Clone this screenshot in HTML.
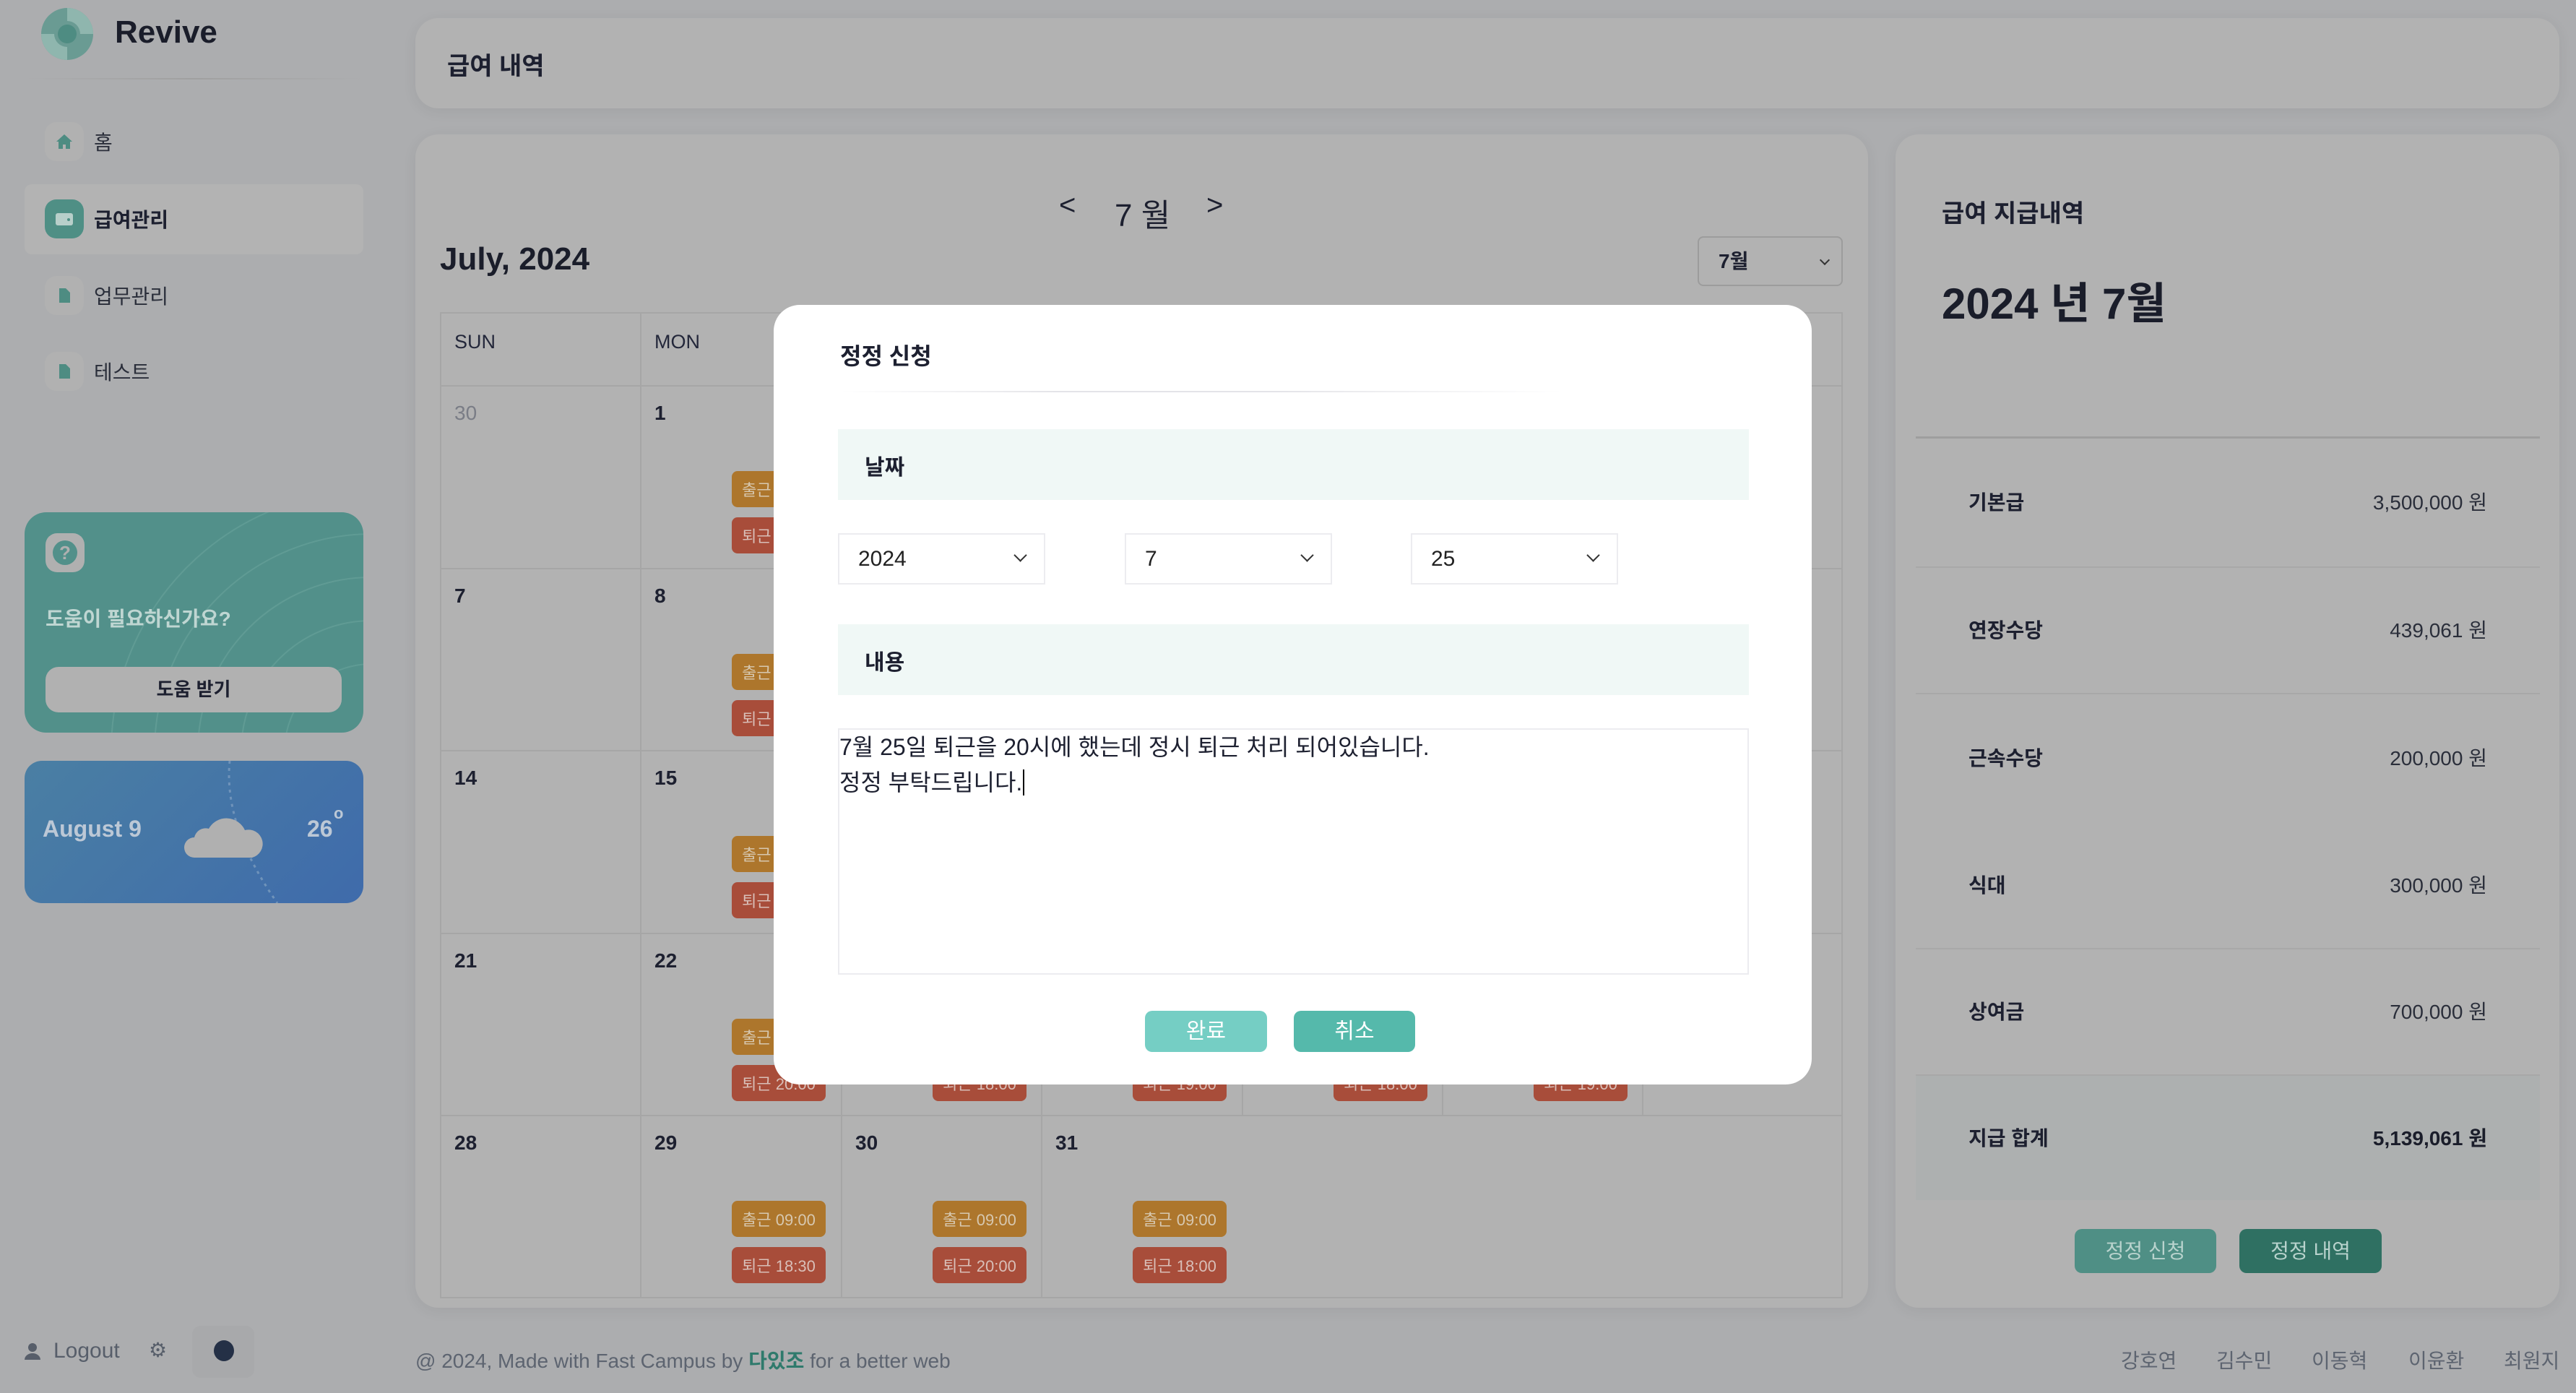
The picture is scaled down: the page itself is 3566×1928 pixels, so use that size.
<!DOCTYPE html>
<html><head><meta charset="utf-8">
<style>
*{box-sizing:border-box;margin:0;padding:0}
body{width:3566px;height:1928px;background:#acadaf;font-family:"Liberation Sans","Noto Sans CJK KR",sans-serif;color:#1d2030;position:relative;overflow:hidden}
.a{position:absolute}
.card{position:absolute;background:#b2b2b2;border-radius:32px;box-shadow:0 4px 20px rgba(0,0,0,0.06)}
.nav{position:absolute;left:62px;font-size:28px;display:flex;align-items:center;gap:14px;color:#2a2e3a}
.ic{width:54px;height:54px;border-radius:16px;background:#b1b1b1;display:flex;align-items:center;justify-content:center}
.day{position:absolute;font-size:28px;font-weight:bold;color:#1d2030}
.hd{position:absolute;font-size:27px;color:#23273a;top:458px}
.b{position:absolute;width:130px;height:50px;border-radius:8px;font-size:22px;color:#d7c8b0;display:flex;align-items:center;justify-content:center}
.o{background:#ad762c}
.r{background:#a84d3a;color:#d9bfb8}
.vl{position:absolute;width:2px;background:#a6a6a6}
.hl{position:absolute;height:2px;background:#a6a6a6}
.lab{position:absolute;left:2725px;font-size:28px;font-weight:bold;color:#1d2030}
.val{position:absolute;right:123px;font-size:28px;color:#2a2e3a}
.sep{position:absolute;left:2652px;width:864px;height:2px;background:#a8a8a8}
.sel{position:absolute;top:738px;width:287px;height:71px;border:2px solid #ececf0;font-size:30px;color:#222;padding-left:26px;display:flex;align-items:center}
.sel:after{content:"";position:absolute;right:26px;top:22px;width:11px;height:11px;border-right:2px solid #333;border-bottom:2px solid #333;transform:rotate(45deg)}
.fn{position:absolute;top:1862px;font-size:28px;color:#5d6470}
</style></head><body>

<svg class="a" style="left:56px;top:10px" width="74" height="74" viewBox="0 0 74 74">
<circle cx="37" cy="37" r="36" fill="#6a9b93"/>
<path d="M37 1 A36 36 0 0 1 73 37 L55 37 A18 18 0 0 0 37 19Z" fill="#8fb6ae"/>
<path d="M37 73 A36 36 0 0 1 1 37 L19 37 A18 18 0 0 0 37 55Z" fill="#8fb6ae"/>
<circle cx="37" cy="37" r="13" fill="#4e8c82"/>
</svg>
<div class="a" style="left:159px;top:20px;font-size:44px;font-weight:bold;color:#1a1d2a">Revive</div>
<div class="a" style="left:34px;top:108px;width:470px;height:2px;background:linear-gradient(90deg,rgba(160,160,160,0),#a0a0a0,rgba(160,160,160,0))"></div>

<div class="nav" style="top:169px"><div class="ic"><svg width="24" height="22" viewBox="0 0 24 22"><path d="M12 1 L1 11 H4 V21 H10 V15 H14 V21 H20 V11 H23Z" fill="#4e8c82"/></svg></div><span>홈</span></div>
<div class="a" style="left:34px;top:255px;width:469px;height:97px;background:#b3b3b3;border-radius:10px"></div>
<div class="nav" style="top:276px;font-weight:bold;color:#1d2030"><div class="ic" style="background:#4f8f85"><svg width="28" height="22" viewBox="0 0 28 22"><rect x="2" y="3" width="24" height="17" rx="3" fill="#b8cfca"/><circle cx="20" cy="12" r="2" fill="#4f8f85"/></svg></div><span>급여관리</span></div>
<div class="nav" style="top:382px"><div class="ic"><svg width="18" height="22" viewBox="0 0 18 22"><path d="M2 1 H11 L17 7 V21 H2Z" fill="#4e8c82"/></svg></div><span>업무관리</span></div>
<div class="nav" style="top:487px"><div class="ic"><svg width="18" height="22" viewBox="0 0 18 22"><path d="M2 1 H11 L17 7 V21 H2Z" fill="#4e8c82"/></svg></div><span>테스트</span></div>

<div class="a" style="left:34px;top:709px;width:469px;height:305px;border-radius:30px;background:#52908a;overflow:hidden">
 <svg class="a" style="left:0;top:0" width="469" height="305"><g fill="none" stroke="#6aa39c" stroke-width="2" opacity="0.6"><circle cx="480" cy="330" r="120"/><circle cx="480" cy="330" r="180"/><circle cx="480" cy="330" r="240"/><circle cx="480" cy="330" r="300"/><circle cx="480" cy="330" r="360"/></g></svg>
 <div class="a" style="left:29px;top:29px;width:54px;height:54px;border-radius:16px;background:#b0b0b0;display:flex;align-items:center;justify-content:center"><div style="width:34px;height:34px;border-radius:50%;background:#52908a;color:#b0b0b0;font-size:26px;font-weight:bold;text-align:center;line-height:34px">?</div></div>
 <div class="a" style="left:29px;top:126px;font-size:28px;font-weight:bold;color:#bfd6d2">도움이 필요하신가요?</div>
 <div class="a" style="left:29px;top:214px;width:410px;height:63px;border-radius:18px;background:#b1b1b1;font-size:26px;font-weight:bold;color:#1d2030;text-align:center;line-height:63px">도움 받기</div>
</div>
<div class="a" style="left:34px;top:1053px;width:469px;height:197px;border-radius:24px;background:linear-gradient(135deg,#4a7fa3,#3f6bab);overflow:hidden">
 <svg class="a" style="left:0;top:0" width="469" height="197"><path d="M284 0 Q275 90 350 197" fill="none" stroke="#6f93ba" stroke-width="3" stroke-dasharray="4 6"/></svg>
 <div class="a" style="left:25px;top:76px;font-size:32px;font-weight:bold;color:#bcc8d6">August 9</div>
 <svg class="a" style="left:220px;top:66px" width="110" height="70" viewBox="0 0 110 70"><path d="M15 68 A14 14 0 0 1 15 40 A16 16 0 0 1 35 28 A28 28 0 0 1 85 30 A18 18 0 0 1 95 68Z" fill="#b0b0b0"/></svg>
 <div class="a" style="left:391px;top:76px;font-size:32px;font-weight:bold;color:#bcc8d6">26</div>
 <div class="a" style="left:428px;top:60px;font-size:22px;font-weight:bold;color:#bcc8d6">o</div>
</div>

<svg class="a" style="left:34px;top:1858px" width="22" height="24" viewBox="0 0 22 24"><circle cx="11" cy="7" r="6" fill="#575e6a"/><path d="M0 24 A11 9 0 0 1 22 24Z" fill="#575e6a"/></svg>
<div class="a" style="left:74px;top:1853px;font-size:30px;color:#575e6a">Logout</div>
<div class="a" style="left:206px;top:1852px;font-size:28px;color:#575e6a">⚙</div>
<div class="a" style="left:266px;top:1835px;width:86px;height:72px;border-radius:12px;background:#a8a9ab"></div>
<div class="a" style="left:296px;top:1855px;width:28px;height:29px;border-radius:50%;background:#243046"></div>

<div class="card" style="left:575px;top:25px;width:2968px;height:125px"></div>
<div class="a" style="left:619px;top:64px;font-size:34px;font-weight:bold;color:#1d2030">급여 내역</div>

<div class="card" style="left:575px;top:186px;width:2011px;height:1624px"></div>
<div class="a" style="left:1466px;top:262px;font-size:40px;color:#1d2030">&lt;</div>
<div class="a" style="left:1543px;top:262px;font-size:44px;color:#1d2030">7 월</div>
<div class="a" style="left:1670px;top:262px;font-size:40px;color:#1d2030">&gt;</div>
<div class="a" style="left:609px;top:334px;font-size:44px;font-weight:bold;color:#1a1d2a">July, 2024</div>
<div class="a" style="left:2350px;top:327px;width:201px;height:69px;border:2px solid #9c9c9c;border-radius:8px;font-size:28px;font-weight:bold;padding-left:27px;line-height:65px">7월<span style="position:absolute;right:18px;top:26px;width:10px;height:10px;border-right:2px solid #333;border-bottom:2px solid #333;transform:rotate(45deg)"></span></div>

<div class="a" style="left:609px;top:432px;width:1942px;height:1365px;border:2px solid #a6a6a6"></div>
<div class="hl" style="left:609px;top:533px;width:1942px"></div>
<div class="hl" style="left:609px;top:786px;width:1942px"></div>
<div class="hl" style="left:609px;top:1038px;width:1942px"></div>
<div class="hl" style="left:609px;top:1291px;width:1942px"></div>
<div class="hl" style="left:609px;top:1543px;width:1942px"></div>
<div class="vl" style="left:886px;top:432px;height:1365px"></div>
<div class="vl" style="left:1164px;top:432px;height:1365px"></div>
<div class="vl" style="left:1441px;top:432px;height:1365px"></div>
<div class="vl" style="left:1719px;top:432px;height:1112px"></div>
<div class="vl" style="left:1996px;top:432px;height:1112px"></div>
<div class="vl" style="left:2273px;top:432px;height:1112px"></div>

<div class="hd" style="left:629px">SUN</div><div class="hd" style="left:906px">MON</div><div class="hd" style="left:1184px">TUE</div><div class="hd" style="left:1461px">WED</div><div class="hd" style="left:1739px">THU</div><div class="hd" style="left:2016px">FRI</div><div class="hd" style="left:2293px">SAT</div>

<div class="day" style="left:629px;top:556px;color:#7a7d86;font-weight:normal">30</div><div class="day" style="left:906px;top:556px">1</div><div class="day" style="left:1184px;top:556px">2</div><div class="day" style="left:1461px;top:556px">3</div><div class="day" style="left:1739px;top:556px">4</div><div class="day" style="left:2016px;top:556px">5</div><div class="day" style="left:2293px;top:556px">6</div>
<div class="day" style="left:629px;top:809px">7</div><div class="day" style="left:906px;top:809px">8</div><div class="day" style="left:1184px;top:809px">9</div><div class="day" style="left:1461px;top:809px">10</div><div class="day" style="left:1739px;top:809px">11</div><div class="day" style="left:2016px;top:809px">12</div><div class="day" style="left:2293px;top:809px">13</div>
<div class="day" style="left:629px;top:1061px">14</div><div class="day" style="left:906px;top:1061px">15</div><div class="day" style="left:1184px;top:1061px">16</div><div class="day" style="left:1461px;top:1061px">17</div><div class="day" style="left:1739px;top:1061px">18</div><div class="day" style="left:2016px;top:1061px">19</div><div class="day" style="left:2293px;top:1061px">20</div>
<div class="day" style="left:629px;top:1314px">21</div><div class="day" style="left:906px;top:1314px">22</div><div class="day" style="left:1184px;top:1314px">23</div><div class="day" style="left:1461px;top:1314px">24</div><div class="day" style="left:1739px;top:1314px">25</div><div class="day" style="left:2016px;top:1314px">26</div><div class="day" style="left:2293px;top:1314px">27</div>
<div class="day" style="left:629px;top:1566px">28</div><div class="day" style="left:906px;top:1566px">29</div><div class="day" style="left:1184px;top:1566px">30</div><div class="day" style="left:1461px;top:1566px">31</div>

<div class="b o" style="left:1013px;top:652px">출근 09:00</div><div class="b r" style="left:1013px;top:716px">퇴근 18:00</div>
<div class="b o" style="left:1291px;top:652px">출근 09:00</div><div class="b r" style="left:1291px;top:716px">퇴근 18:00</div>
<div class="b o" style="left:1568px;top:652px">출근 09:00</div><div class="b r" style="left:1568px;top:716px">퇴근 18:00</div>
<div class="b o" style="left:1846px;top:652px">출근 09:00</div><div class="b r" style="left:1846px;top:716px">퇴근 18:00</div>
<div class="b o" style="left:2123px;top:652px">출근 09:00</div><div class="b r" style="left:2123px;top:716px">퇴근 18:00</div>
<div class="b o" style="left:1013px;top:905px">출근 09:00</div><div class="b r" style="left:1013px;top:969px">퇴근 18:00</div>
<div class="b o" style="left:1291px;top:905px">출근 09:00</div><div class="b r" style="left:1291px;top:969px">퇴근 18:00</div>
<div class="b o" style="left:1568px;top:905px">출근 09:00</div><div class="b r" style="left:1568px;top:969px">퇴근 18:00</div>
<div class="b o" style="left:1846px;top:905px">출근 09:00</div><div class="b r" style="left:1846px;top:969px">퇴근 18:00</div>
<div class="b o" style="left:2123px;top:905px">출근 09:00</div><div class="b r" style="left:2123px;top:969px">퇴근 18:00</div>
<div class="b o" style="left:1013px;top:1157px">출근 09:00</div><div class="b r" style="left:1013px;top:1221px">퇴근 18:00</div>
<div class="b o" style="left:1291px;top:1157px">출근 09:00</div><div class="b r" style="left:1291px;top:1221px">퇴근 18:00</div>
<div class="b o" style="left:1568px;top:1157px">출근 09:00</div><div class="b r" style="left:1568px;top:1221px">퇴근 18:00</div>
<div class="b o" style="left:1846px;top:1157px">출근 09:00</div><div class="b r" style="left:1846px;top:1221px">퇴근 18:00</div>
<div class="b o" style="left:2123px;top:1157px">출근 09:00</div><div class="b r" style="left:2123px;top:1221px">퇴근 18:00</div>
<div class="b o" style="left:1013px;top:1410px">출근 09:00</div><div class="b r" style="left:1013px;top:1474px">퇴근 20:00</div>
<div class="b o" style="left:1291px;top:1410px">출근 09:00</div><div class="b r" style="left:1291px;top:1474px">퇴근 18:00</div>
<div class="b o" style="left:1568px;top:1410px">출근 09:00</div><div class="b r" style="left:1568px;top:1474px">퇴근 19:00</div>
<div class="b o" style="left:1846px;top:1410px">출근 09:00</div><div class="b r" style="left:1846px;top:1474px">퇴근 18:00</div>
<div class="b o" style="left:2123px;top:1410px">출근 09:00</div><div class="b r" style="left:2123px;top:1474px">퇴근 19:00</div>
<div class="b o" style="left:1013px;top:1662px">출근 09:00</div><div class="b r" style="left:1013px;top:1726px">퇴근 18:30</div>
<div class="b o" style="left:1291px;top:1662px">출근 09:00</div><div class="b r" style="left:1291px;top:1726px">퇴근 20:00</div>
<div class="b o" style="left:1568px;top:1662px">출근 09:00</div><div class="b r" style="left:1568px;top:1726px">퇴근 18:00</div>

<div class="card" style="left:2624px;top:186px;width:919px;height:1624px"></div>
<div class="a" style="left:2688px;top:268px;font-size:34px;font-weight:bold;color:#1d2030">급여 지급내역</div>
<div class="a" style="left:2688px;top:372px;font-size:60px;font-weight:bold;color:#1a1d2a">2024 년 7월</div>
<div class="a" style="left:2652px;top:604px;width:864px;height:3px;background:#9e9e9e"></div>
<div class="sep" style="top:784px"></div><div class="sep" style="top:959px"></div><div class="sep" style="top:1312px"></div><div class="sep" style="top:1487px"></div>
<div class="a" style="left:2652px;top:1489px;width:864px;height:172px;background:#adb0b0"></div>
<div class="lab" style="top:674px">기본급</div><div class="val" style="top:674px">3,500,000 원</div>
<div class="lab" style="top:851px">연장수당</div><div class="val" style="top:851px">439,061 원</div>
<div class="lab" style="top:1028px">근속수당</div><div class="val" style="top:1028px">200,000 원</div>
<div class="lab" style="top:1204px">식대</div><div class="val" style="top:1204px">300,000 원</div>
<div class="lab" style="top:1379px">상여금</div><div class="val" style="top:1379px">700,000 원</div>
<div class="lab" style="top:1554px">지급 합계</div><div class="val" style="top:1554px;font-weight:bold;color:#1a1d2a">5,139,061 원</div>
<div class="a" style="left:2872px;top:1701px;width:196px;height:61px;border-radius:10px;background:#4f8f85;color:#b9d3cd;font-size:28px;text-align:center;line-height:61px">정정 신청</div>
<div class="a" style="left:3100px;top:1701px;width:197px;height:61px;border-radius:10px;background:#2f7062;color:#b9d3cd;font-size:28px;text-align:center;line-height:61px">정정 내역</div>

<div class="fn" style="left:575px">@ 2024, Made with Fast Campus by <b style="color:#2f7a6c">다있조</b> for a better web</div>
<div class="fn" style="left:2936px">강호연</div><div class="fn" style="left:3068px">김수민</div><div class="fn" style="left:3200px">이동혁</div><div class="fn" style="left:3334px">이윤환</div><div class="fn" style="left:3466px">최원지</div>

<div class="a" style="left:1071px;top:422px;width:1437px;height:1079px;background:#fff;border-radius:36px"></div>
<div class="a" style="left:1163px;top:468px;font-size:32px;font-weight:bold;color:#1d2030">정정 신청</div>
<div class="a" style="left:1163px;top:541px;width:1000px;height:2px;background:linear-gradient(90deg,#fff,#e4e4e8 30%,#e4e4e8 60%,#fff)"></div>
<div class="a" style="left:1160px;top:594px;width:1261px;height:98px;background:#f0f8f6"></div>
<div class="a" style="left:1197px;top:622px;font-size:30px;font-weight:bold;color:#1d2030">날짜</div>
<div class="sel" style="left:1160px">2024</div>
<div class="sel" style="left:1557px">7</div>
<div class="sel" style="left:1953px">25</div>
<div class="a" style="left:1160px;top:864px;width:1261px;height:98px;background:#f0f8f6"></div>
<div class="a" style="left:1197px;top:892px;font-size:30px;font-weight:bold;color:#1d2030">내용</div>
<div class="a" style="left:1160px;top:1008px;width:1261px;height:341px;border:2px solid #ececf0"></div>
<div class="a" style="left:1162px;top:1010px;font-size:32px;line-height:49px;color:#1d2030">7월 25일 퇴근을 20시에 했는데 정시 퇴근 처리 되어있습니다.<br>정정 부탁드립니다.<span style="border-left:2px solid #000;margin-left:1px"></span></div>
<div class="a" style="left:1585px;top:1399px;width:169px;height:57px;border-radius:10px;background:#75cec4;color:#fff;font-size:30px;text-align:center;line-height:57px">완료</div>
<div class="a" style="left:1791px;top:1399px;width:168px;height:57px;border-radius:10px;background:#55b9ab;color:#fff;font-size:30px;text-align:center;line-height:57px">취소</div>
</body></html>
